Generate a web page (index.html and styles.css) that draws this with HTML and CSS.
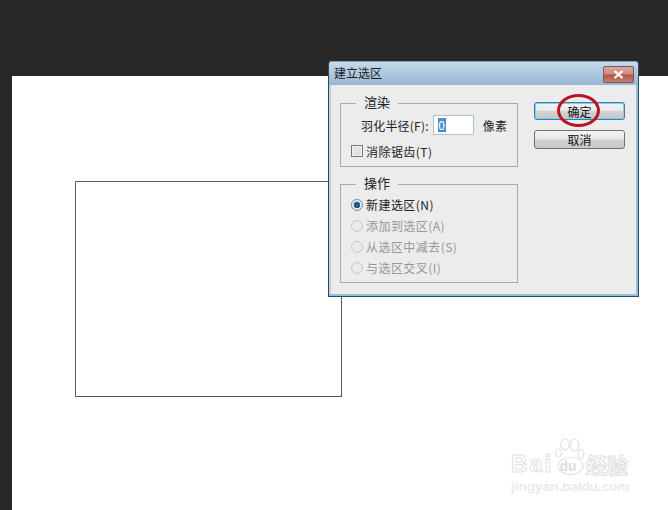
FILE: index.html
```html
<!DOCTYPE html>
<html lang="zh-CN">
<head>
  <meta charset="UTF-8" />
  <title>建立选区</title>
  <link rel="stylesheet" href="styles.css">
</head>
<body>
  <div class="workspace">
    <div class="canvas">
      <div class="selection"></div>

      <div class="watermark">
        <div class="wm-row">
          <span class="wm-latin">Bai</span>
          <svg class="wm-paw" width="30" height="38" viewBox="0 0 30 38" fill="#fff" stroke="#e2e2e2" stroke-width="1.2">
            <ellipse cx="3.5" cy="15" rx="2.8" ry="4" />
            <ellipse cx="10" cy="6.5" rx="4.2" ry="5.5" />
            <ellipse cx="19.5" cy="7" rx="4.2" ry="6" />
            <ellipse cx="26" cy="16" rx="2.8" ry="4.5" />
            <ellipse cx="15.5" cy="28" rx="12.5" ry="8.5" />
          </svg>
          <span class="wm-du">du</span>
          <span class="wm-cn">经验</span>
        </div>
        <div class="wm-url">jingyan.baidu.com</div>
      </div>
    </div>

    <div class="dialog">
      <div class="titlebar">
        <span class="title">建立选区</span>
        <button class="close"><svg width="11" height="9" viewBox="0 0 11 9"><path d="M1.5 1l8 7M9.5 1l-8 7" stroke="#fff" stroke-width="2.2" fill="none" /></svg></button>
      </div>
      <div class="dialog-body">
        <div class="groups">
          <div class="group group-render">
            <div class="legend">渲染</div>
            <div class="feather-row">
              <span>羽化半径(F):</span>
              <span class="input"><span class="input-sel">0</span></span>
              <span class="unit">像素</span>
            </div>
            <div class="option">
              <span class="checkbox"></span>
              <span>消除锯齿(T)</span>
            </div>
          </div>
          <div class="group group-op">
            <div class="legend">操作</div>
            <div class="option"><span class="radio radio-on"></span><span>新建选区(N)</span></div>
            <div class="option disabled"><span class="radio"></span><span>添加到选区(A)</span></div>
            <div class="option disabled"><span class="radio"></span><span>从选区中减去(S)</span></div>
            <div class="option disabled"><span class="radio"></span><span>与选区交叉(I)</span></div>
          </div>
        </div>
        <div class="buttons">
          <button class="btn btn-default">确定</button>
          <button class="btn">取消</button>
        </div>
      </div>
      <div class="mark"></div>
    </div>
  </div>
</body>
</html>
```

FILE: styles.css
```css
* {
  margin: 0;
  padding: 0;
  box-sizing: border-box;
}

body {
  background: #282828;
  width: 668px;
  height: 510px;
  overflow: hidden;
  font-family: "Noto Sans CJK SC", "Liberation Sans", sans-serif;
}

.workspace {
  position: relative;
  width: 668px;
  height: 510px;
  padding: 76px 0 0 12px;
}

.canvas {
  position: relative;
  background: #fff;
  height: 434px;
}

.selection {
  position: absolute;
  left: 63px;
  top: 105px;
  width: 267px;
  height: 216px;
  border: 1px solid #5a5a5a;
}

/* watermark */
.watermark {
  position: absolute;
  left: 499px;
  top: 362px;
  width: 125px;
  color: #fff;
}

.wm-row {
  display: flex;
  align-items: flex-end;
  height: 38px;
  position: relative;
}

.wm-latin {
  width: 44px;
  font-family: "Liberation Sans", sans-serif;
  font-size: 23px;
  line-height: 24px;
  font-weight: 700;
  letter-spacing: 2px;
  color: #fff;
  -webkit-text-stroke: 1px #e2e2e2;
}

.wm-paw {
  flex: none;
  width: 30px;
  height: 38px;
}

.wm-du {
  position: absolute;
  left: 42px;
  top: 20px;
  width: 30px;
  text-align: center;
  font-family: "Liberation Sans", sans-serif;
  font-size: 14px;
  line-height: 16px;
  font-weight: 700;
  color: #ddd;
}

.wm-cn {
  flex: none;
  margin-left: 1px;
  font-size: 21px;
  line-height: 24px;
  font-weight: 700;
  color: #fff;
  -webkit-text-stroke: 1px #dedede;
}

.wm-url {
  margin-top: 3px;
  font-family: "Liberation Sans", sans-serif;
  font-size: 13.5px;
  line-height: 16px;
  font-weight: 700;
  color: #eaeaea;
}

/* dialog */
.dialog {
  position: absolute;
  left: 328px;
  top: 61px;
  width: 311px;
  height: 236px;
  background: #ececec;
  border: 1px solid #2f4a5c;
  border-top-color: #8aa0b0;
  border-radius: 4px 4px 0 0;
  box-shadow: inset -2px -2px 0 #8fc0dc, inset 2px 0 0 #b9d3e5;
  font-size: 12px;
  color: #222;
}

.titlebar {
  display: flex;
  align-items: center;
  justify-content: space-between;
  height: 23px;
  padding: 0 4px 0 5px;
  background: linear-gradient(#c5d9ea, #97b6d1);
  border-radius: 3px 3px 0 0;
}

.title {
  margin-top: -3px;
  font-size: 12px;
  color: #1c1c1c;
}

.close {
  display: flex;
  align-items: center;
  justify-content: center;
  width: 31px;
  height: 17px;
  margin-top: 1px;
  border: 1px solid #6e5a58;
  border-radius: 2px;
  background: linear-gradient(#d8a89e 0%, #cc8a7c 48%, #b4543f 52%, #c28272 100%);
}

.dialog-body {
  display: flex;
  padding: 18px 13px 0 11px;
}

.groups {
  display: flex;
  flex-direction: column;
  gap: 17px;
  width: 178px;
}

.group {
  position: relative;
  border: 1px solid #a8a8a8;
}

.group-render {
  height: 64px;
  padding: 11px 0 0 10px;
}

.group-op {
  height: 99px;
  padding: 9px 0 0 10px;
}

.legend {
  position: absolute;
  left: 15px;
  top: -11px;
  padding: 0 8px;
  background: #ececec;
  font-size: 13px;
  line-height: 17px;
  color: #222;
}

.feather-row {
  display: flex;
  align-items: center;
  height: 20px;
  padding-left: 10px;
  letter-spacing: .2px;
}

.input {
  display: block;
  width: 41px;
  height: 20px;
  margin-left: 4px;
  padding: 2px 0 0 4px;
  background: #fff;
  border: 1px solid #a9c3d6;
}

.input-sel {
  display: block;
  width: 8px;
  height: 14px;
  background: #4a8fcb;
  color: #fff;
  font-size: 12px;
  line-height: 14px;
  text-align: center;
}

.unit {
  margin-left: 9px;
}

.option {
  display: flex;
  align-items: center;
  height: 21px;
  letter-spacing: .45px;
}

.group-render .option {
  margin-top: 6px;
  height: 20px;
}

.disabled {
  color: #979797;
}

.checkbox {
  width: 12px;
  height: 12px;
  margin-right: 3px;
  background: #e2e2e2;
  border: 1px solid #777;
  box-shadow: inset 0 0 0 1px #f4f4f4;
}

.radio {
  width: 12px;
  height: 12px;
  margin-right: 3px;
  border-radius: 50%;
  background: #eaeaea;
  border: 1px solid #c8c8c8;
}

.radio-on {
  background: radial-gradient(circle, #1d5a86 0 3px, #e6eef5 3.6px);
  border-color: #6f8ea6;
}

.buttons {
  display: flex;
  flex-direction: column;
  gap: 10px;
  margin: -1px 0 0 16px;
  width: 91px;
}

.btn {
  height: 19px;
  font-family: inherit;
  font-size: 12px;
  line-height: 15px;
  color: #111;
  border: 1px solid #707070;
  border-radius: 3px;
  background: linear-gradient(#f4f4f4 0%, #e8e8e8 48%, #d2d2d2 52%, #c6c6c6 100%);
}

.btn-default {
  height: 18px;
  border-color: #3c7fa6;
  box-shadow: inset 0 0 0 1px #7fd0ee;
}

/* red ring hand-drawn over the OK button */
.mark {
  position: absolute;
  left: 228px;
  top: 32px;
  width: 43px;
  height: 33px;
  border: 3px solid #bd1220;
  border-radius: 50%;
}
```
